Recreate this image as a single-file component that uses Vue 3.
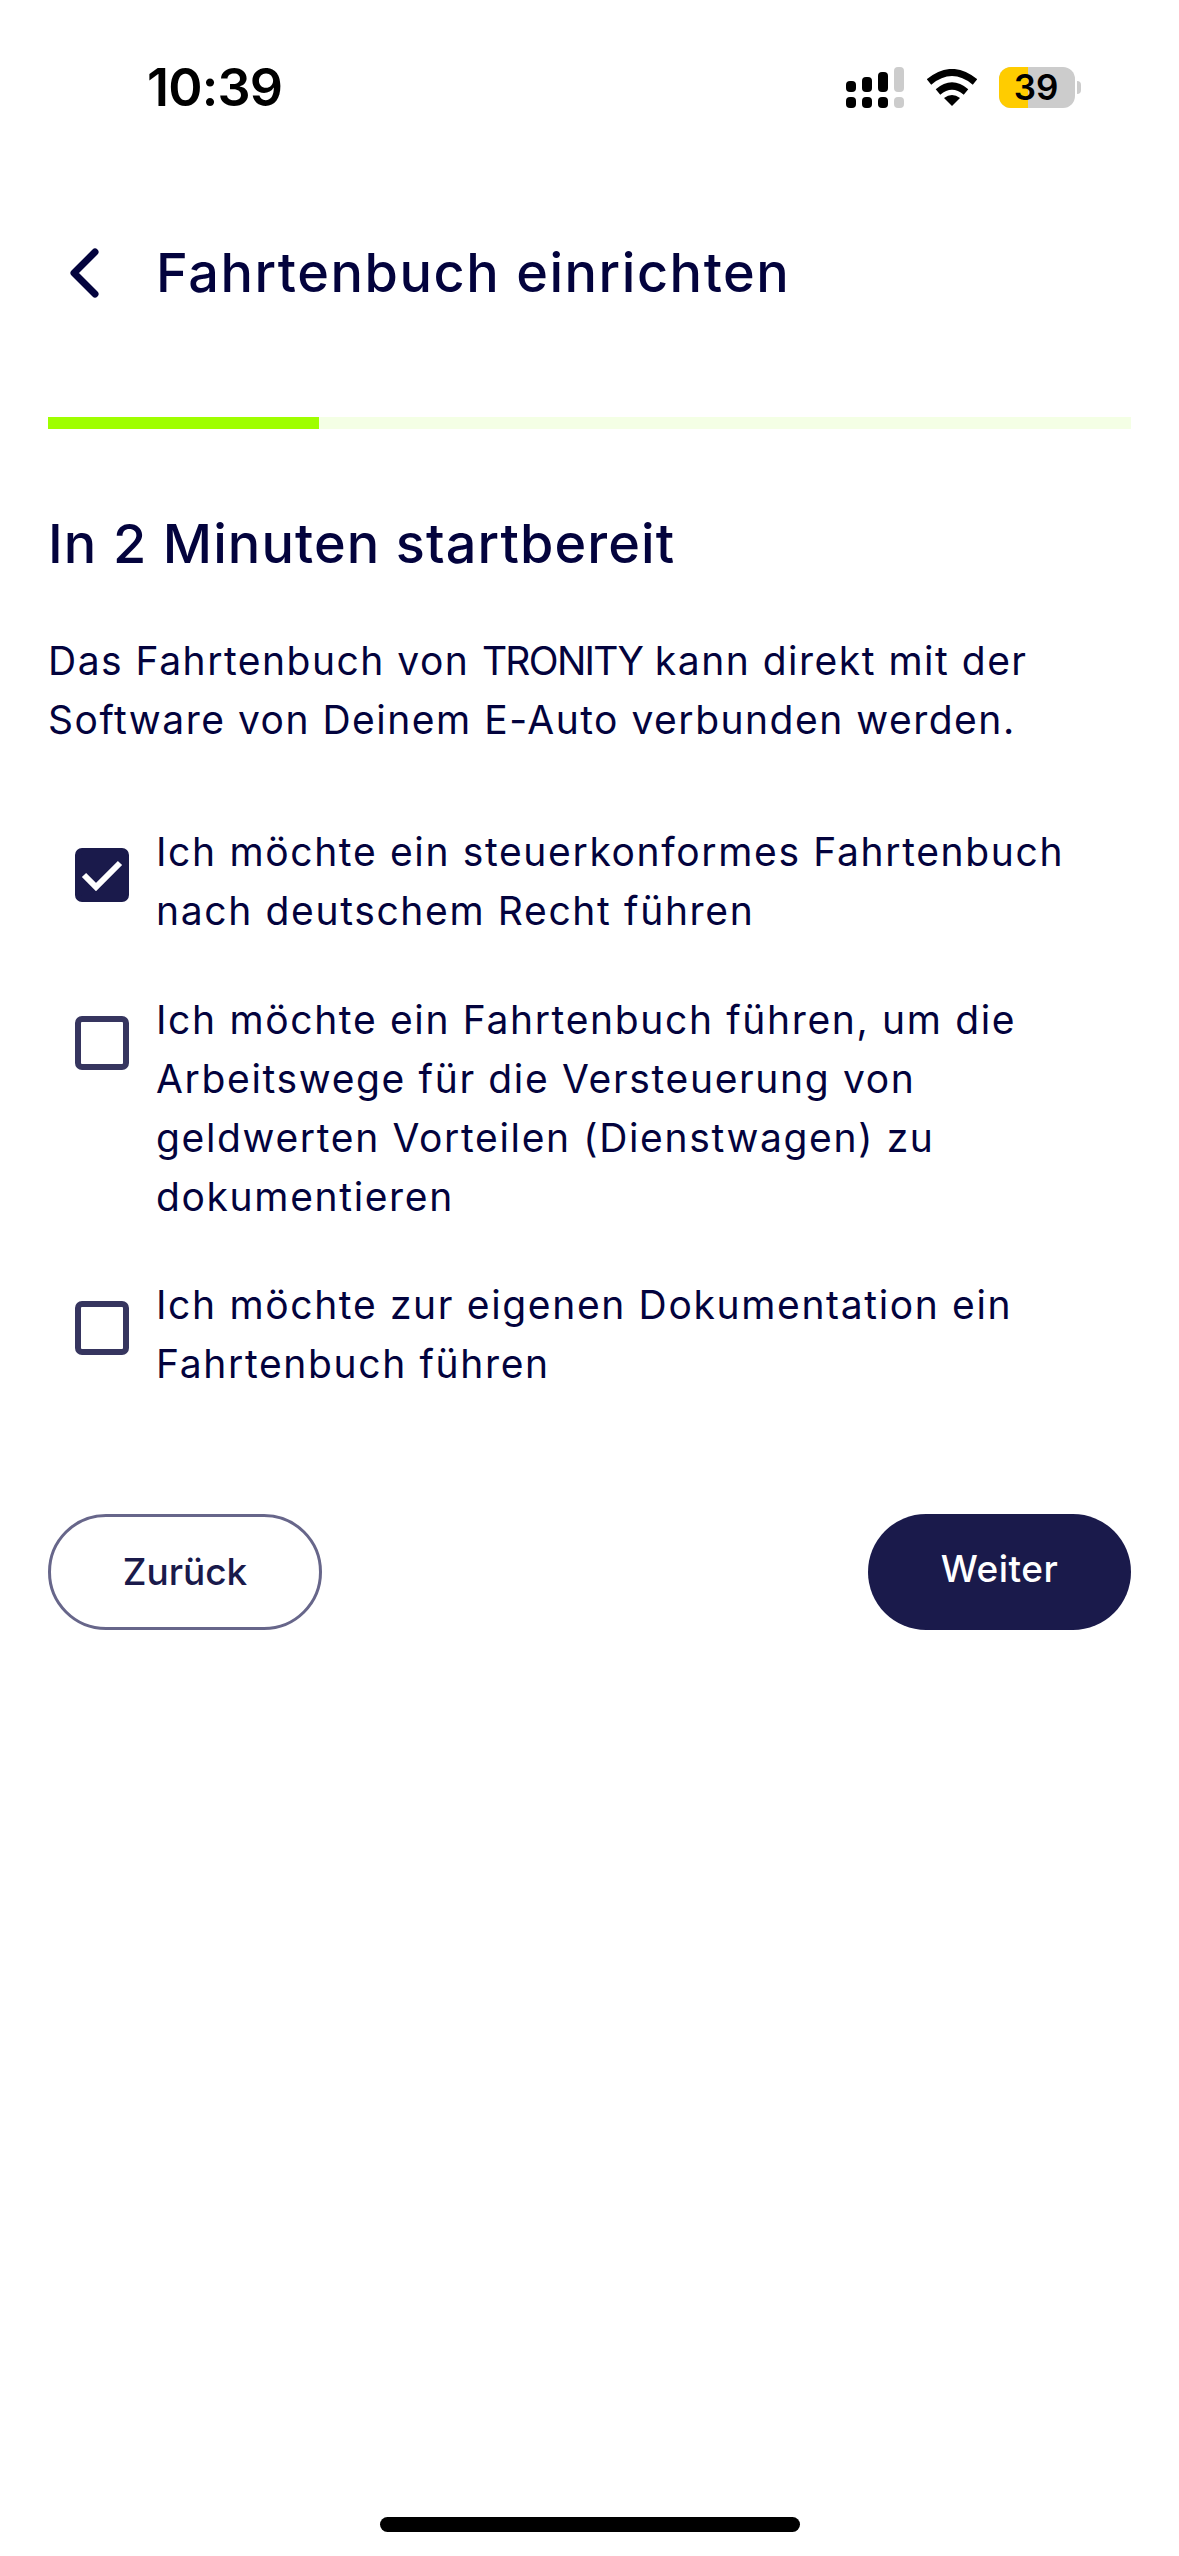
<template>
  <div class="screen">
    <!-- status bar -->
    <div class="status">
      <span class="time">10:39</span>
      <div class="status-icons">
        <svg width="58" height="41" viewBox="0 0 58 41">
          <rect x="0" y="14" width="10" height="11" rx="4" fill="#000" />
          <rect x="16" y="10" width="10" height="15" rx="4" fill="#000" />
          <rect x="32" y="5" width="10" height="20" rx="4" fill="#000" />
          <rect x="48" y="0" width="10" height="25" rx="4" fill="#ccc" />
          <rect x="0" y="30" width="10" height="11" rx="4" fill="#000" />
          <rect x="16" y="30" width="10" height="11" rx="4" fill="#000" />
          <rect x="32" y="30" width="10" height="11" rx="4" fill="#000" />
          <rect x="48" y="30" width="10" height="11" rx="4" fill="#ccc" />
        </svg>
        <svg class="wifi" width="50" height="38" viewBox="0 0 50 38">
          <path d="M2 13 Q25 -6 48 13" fill="none" stroke="#000" stroke-width="7" />
          <path d="M11 23 Q25 11 39 23" fill="none" stroke="#000" stroke-width="7" />
          <path d="M17 29 Q25 23 33 29 L25 37 Z" fill="#000" />
        </svg>
        <div class="battery">
          <div class="battery-fill"></div>
          <span class="battery-num">39</span>
        </div>
        <div class="battery-tip"></div>
      </div>
    </div>

    <!-- header -->
    <div class="header">
      <svg class="back" width="30" height="52" viewBox="0 0 30 52">
        <path d="M26 5 L5 26 L26 47" fill="none" stroke="#03033d" stroke-width="7" stroke-linecap="round" stroke-linejoin="round" />
      </svg>
      <h1 class="title">Fahrtenbuch einrichten</h1>
    </div>

    <div class="progress">
      <div class="progress-done" :style="{ width: progress + '%' }"></div>
    </div>

    <div class="content">
      <h2 class="headline">In 2 Minuten startbereit</h2>
      <p class="intro">Das Fahrtenbuch von <span class="brand">TRONITY</span> kann direkt mit der<br>Software von Deinem E-Auto verbunden werden.</p>

      <div class="options">
        <div v-for="opt in options" :key="opt.id" class="option">
          <div class="box" :class="{ checked: opt.checked }">
            <svg v-if="opt.checked" width="42" height="32" viewBox="0 0 42 32">
              <path d="M3 16 L15 28 L39 4" fill="none" stroke="#fff" stroke-width="6" />
            </svg>
          </div>
          <div class="option-text">
            <span v-for="line in opt.lines" :key="line" class="line">{{ line }}</span>
          </div>
        </div>
      </div>

      <div class="buttons">
        <button class="btn btn-back">Zurück</button>
        <button class="btn btn-next">Weiter</button>
      </div>
    </div>

    <div class="home-bar"></div>
  </div>
</template>

<script setup>
const progress = 25

const options = [
  {
    id: 1,
    checked: true,
    lines: ['Ich möchte ein steuerkonformes Fahrtenbuch', 'nach deutschem Recht führen']
  },
  {
    id: 2,
    checked: false,
    lines: [
      'Ich möchte ein Fahrtenbuch führen, um die',
      'Arbeitswege für die Versteuerung von',
      'geldwerten Vorteilen (Dienstwagen) zu',
      'dokumentieren'
    ]
  },
  {
    id: 3,
    checked: false,
    lines: ['Ich möchte zur eigenen Dokumentation ein', 'Fahrtenbuch führen']
  }
]
</script>

<style>
html, body {
  margin: 0;
  background: #fff;
}
</style>

<style scoped>
.screen {
  position: relative;
  width: 1179px;
  height: 2556px;
  background: #fff;
  overflow: hidden;
  font-family: Inter, "Open Sans", sans-serif;
  color: #03033d;
}

.status {
  height: 224px;
  display: flex;
  justify-content: space-between;
  padding: 0 98px 0 147px;
  box-sizing: border-box;
}

.time {
  font-weight: 600;
  font-size: 52px;
  line-height: 60px;
  color: #000;
  margin-top: 58px;
  letter-spacing: -0.8px;
}

.status-icons {
  display: flex;
  align-items: flex-start;
  margin-top: 67px;
}

.wifi {
  margin: 2px 0 0 23px;
}

.battery {
  position: relative;
  width: 76px;
  height: 41px;
  margin-left: 22px;
  border-radius: 12px;
  background: #ccc;
}

.battery-fill {
  width: 29px;
  height: 100%;
  background: #ffcc00;
  border-radius: 12px 0 0 12px;
}

.battery-num {
  position: absolute;
  left: 0;
  right: 2px;
  top: 0;
  text-align: center;
  font-weight: 600;
  font-size: 35px;
  line-height: 41px;
  color: #000;
}

.battery-tip {
  width: 4px;
  height: 13px;
  margin: 14px 0 0 2px;
  background: #ccc;
  border-radius: 0 4px 4px 0;
}

.header {
  height: 98px;
  display: flex;
  align-items: center;
  padding-left: 69px;
}

.back {
  flex-shrink: 0;
}

.title {
  margin: 0 0 0 57px;
  font-size: 54px;
  font-weight: 500;
  line-height: 70px;
  letter-spacing: 1.55px;
  white-space: nowrap;
}

.progress {
  margin: 95px 48px 0;
  height: 12px;
  background: #f4ffe5;
}

.progress-done {
  height: 100%;
  background: #9fff00;
}

.content {
  padding: 0 48px;
}

.headline {
  margin: 80px 0 0;
  font-size: 54px;
  font-weight: 500;
  line-height: 70px;
  letter-spacing: 1.1px;
  white-space: nowrap;
}

.intro {
  margin: 52px 0 0;
  font-size: 39px;
  line-height: 59px;
  letter-spacing: 1.5px;
  white-space: nowrap;
}

.brand {
  letter-spacing: -1.7px;
}

.options {
  margin-top: 73px;
  display: flex;
  flex-direction: column;
  gap: 49.5px;
}

.option {
  display: flex;
  align-items: flex-start;
  padding-left: 27px;
}

.box {
  flex-shrink: 0;
  width: 54px;
  height: 54px;
  margin-top: 26px;
  box-sizing: border-box;
  border: 6px solid #36355f;
  border-radius: 7px;
  display: flex;
  align-items: center;
  justify-content: center;
}

.box.checked {
  border-color: #1a1a4b;
  background: #1a1a4b;
}

.option-text {
  margin-left: 27px;
  font-size: 39px;
  line-height: 59px;
  letter-spacing: 1.65px;
}

.line {
  display: block;
  white-space: nowrap;
}

.buttons {
  margin-top: 121px;
  display: flex;
  justify-content: space-between;
}

.btn {
  height: 116px;
  font-family: inherit;
  font-size: 37px;
  font-weight: 500;
  border-radius: 58px;
  box-sizing: border-box;
}

.btn-back {
  width: 274px;
  background: #fff;
  border: 3px solid #67668a;
  color: #1a1a4b;
  padding-bottom: 2px;
}

.btn-next {
  width: 263px;
  background: #1a1a4b;
  border: none;
  color: #fff;
  padding-bottom: 9px;
  letter-spacing: 0.5px;
}

.home-bar {
  position: absolute;
  left: 380px;
  bottom: 24px;
  width: 420px;
  height: 15px;
  border-radius: 8px;
  background: #000;
}
</style>
